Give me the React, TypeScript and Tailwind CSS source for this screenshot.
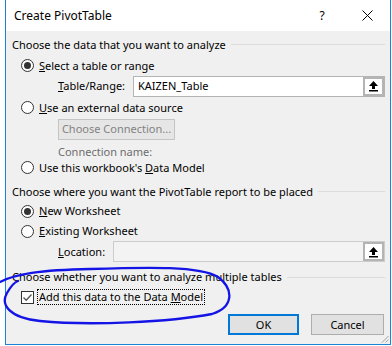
import React from 'react';

const font = { fontFamily: '"Noto Sans", "Open Sans", sans-serif' };

function Radio({ checked }: { checked?: boolean }) {
  return (
    <span className="w-[13px] h-[13px] rounded-full border border-[#333333] bg-white flex items-center justify-center shrink-0">
      {checked && <span className="w-[7px] h-[7px] rounded-full bg-[#333333]" />}
    </span>
  );
}

function SectionHeader({ text, className }: { text: string; className?: string }) {
  return (
    <div className={`flex items-center h-[20px] pl-[6px] pr-[5px] ${className ?? ''}`}>
      <span className="whitespace-nowrap">{text}</span>
      <span className="flex-1 h-px bg-[#dcdcdc] ml-[5px]" />
    </div>
  );
}

function UploadButton() {
  return (
    <span className="w-[21px] h-full border-[2px] border-[#b4b4b4] bg-white flex items-center justify-center shrink-0">
      <svg width="11" height="12" viewBox="0 0 11 12">
        <path d="M5.5 1 L10 6 H7 V9 H4 V6 H1 Z" fill="#000" />
        <rect x="1" y="10" width="9" height="1.5" fill="#000" />
      </svg>
    </span>
  );
}

export default function App() {
  return (
    <div className="relative w-[392px] h-[346px] bg-white overflow-hidden text-[11px] leading-[14px] text-black" style={font}>
      <div className="ml-[5px] w-[386px] h-[345px] border-x border-b border-[#1883d7] bg-[#f0f0f0] flex flex-col">
        {/* Title bar */}
        <div className="h-[31px] bg-white flex items-center shrink-0 text-[12px]">
          <span className="pl-[8px] flex-1">Create PivotTable</span>
          <span className="w-[10px] text-center mr-[35px]">?</span>
          <svg width="11" height="11" viewBox="0 0 11 11" className="mr-[17px]">
            <path d="M0.5 0.5 L10.5 10.5 M10.5 0.5 L0.5 10.5" stroke="#000" strokeWidth="1" />
          </svg>
        </div>

        <SectionHeader text="Choose the data that you want to analyze" className="mt-[4px]" />

        <div className="flex items-center h-[20px] pl-[15px] gap-[5px] mt-[1px]">
          <Radio checked />
          <span><u>S</u>elect a table or range</span>
        </div>

        <div className="flex items-center h-[21px] pl-[52px]">
          <span className="w-[75px]"><u>T</u>able/Range:</span>
          <div className="flex-1 mr-[5px] h-full flex border border-[#b4b4b4] bg-white">
            <span className="flex-1 pl-[4px] flex items-center">KAIZEN_Table</span>
            <UploadButton />
          </div>
        </div>

        <div className="flex items-center h-[20px] pl-[15px] gap-[5px] mt-[1px]">
          <Radio />
          <span><u>U</u>se an external data source</span>
        </div>

        <div className="pl-[52px] mt-[1px]">
          <div className="w-[117px] h-[21px] border border-[#c4c4c4] bg-[#e6e6e6] text-[#838383] flex items-center justify-center whitespace-nowrap">
            Choose Connection...
          </div>
        </div>

        <div className="flex items-center h-[16px] pl-[52px] mt-[4px] text-[#6d6d6d]">Connection name:</div>

        <div className="flex items-center h-[16px] pl-[15px] gap-[5px]">
          <Radio />
          <span>Use this workbook's <u>D</u>ata Model</span>
        </div>

        <SectionHeader text="Choose where you want the PivotTable report to be placed" className="mt-[6px]" />

        <div className="flex items-center h-[20px] pl-[15px] gap-[5px]">
          <Radio checked />
          <span><u>N</u>ew Worksheet</span>
        </div>

        <div className="flex items-center h-[20px] pl-[15px] gap-[5px]">
          <Radio />
          <span><u>E</u>xisting Worksheet</span>
        </div>

        <div className="flex items-center h-[21px] pl-[52px]">
          <span className="w-[55px]"><u>L</u>ocation:</span>
          <div className="flex-1 mr-[5px] h-full flex border border-[#cccccc] bg-[#f3f3f3]">
            <span className="flex-1" />
            <UploadButton />
          </div>
        </div>

        <SectionHeader text="Choose whether you want to analyze multiple tables" className="mt-[5px]" />

        <div className="flex items-center h-[20px] pl-[15px] gap-[3px]">
          <span className="w-[13px] h-[13px] border border-[#333333] bg-white flex items-center justify-center shrink-0">
            <svg width="11" height="11" viewBox="0 0 11 11">
              <path d="M1.5 5.5 L4.2 8.3 L9.5 2.5" stroke="#555" strokeWidth="1.3" fill="none" />
            </svg>
          </span>
          <span className="border border-dotted border-black px-[1px] leading-[14px]">
            Add this data to the Data <u>M</u>odel
          </span>
        </div>

        <div className="flex justify-end gap-[12px] pr-[6px] mt-[7px]">
          <button className="w-[71px] h-[21px] border-2 border-[#0078d7] bg-[#e1e1e1] flex items-center justify-center">
            OK
          </button>
          <button className="w-[73px] h-[21px] border border-[#adadad] bg-[#e1e1e1] flex items-center justify-center">
            Cancel
          </button>
        </div>

        <div className="flex-1 flex justify-end items-end pr-[1px] pb-[1px]">
          <svg width="8" height="8" viewBox="0 0 8 8">
            <path d="M7.5 1 L1 7.5 M7.5 4.5 L4.5 7.5" stroke="#a0a0a0" strokeWidth="1" />
          </svg>
        </div>
      </div>

      {/* Hand-drawn annotation circling the data-model option */}
      <svg className="absolute left-0 top-0 pointer-events-none" width="392" height="346" viewBox="0 0 392 346">
        <path
          d="M0 282 C15 274 40 270 90 269 C150 267 200 266 218 277 C234 289 234 307 212 314 C170 322 90 326 40 321 C10 318 0 305 7 293 C11 286 15 282 18 281"
          stroke="#1414e6"
          strokeWidth="2.3"
          fill="none"
          strokeLinecap="round"
        />
      </svg>
    </div>
  );
}
